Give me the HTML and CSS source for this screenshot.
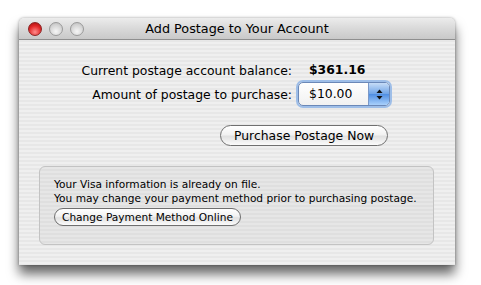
FILE: index.html
```html
<!DOCTYPE html>
<html lang="en">

<head>
    <meta charset="UTF-8">
    <meta name="viewport" content="width=device-width, initial-scale=1.0">
    <title>Add Postage to Your Account</title>
    <link rel="stylesheet" href="styles.css">
</head>

<body>
    <div class="window">
        <div class="titlebar">
            <div class="lights">
                <span class="light light-close"></span>
                <span class="light"></span>
                <span class="light"></span>
            </div>
            <div class="title">Add Postage to Your Account</div>
        </div>

        <div class="content">
            <div class="form">
                <div class="label">Current postage account balance:</div>
                <div class="balance">$361.16</div>

                <div class="label">Amount of postage to purchase:</div>
                <div class="popup">
                    <span class="popup-value">$10.00</span>
                    <span class="popup-arrows">
                        <svg width="7" height="11" viewBox="0 0 7 11">
                            <path d="M3.5 0.5 L6.5 4 L0.5 4 Z" fill="#111" />
                            <path d="M3.5 10.5 L6.5 7 L0.5 7 Z" fill="#111" />
                        </svg>
                    </span>
                </div>
            </div>

            <div class="actions">
                <button class="btn">Purchase Postage Now</button>
            </div>

            <!-- 付款信息分组框 -->
            <div class="group">
                <p>Your Visa information is already on file.</p>
                <p>You may change your payment method prior to purchasing postage.</p>
                <button class="btn btn-small">Change Payment Method Online</button>
            </div>
        </div>
    </div>
</body>

</html>
```

FILE: styles.css
```css
body {
    margin: 0;
    padding: 18px 26px 20px 19px;
    background-color: #fff;
    font-family: "DejaVu Sans", sans-serif;
    font-size: 12.4px;
    color: #000;
}

.window {
    width: 436px;
    height: 247px;
    border-radius: 5px 5px 0 0;
    background-color: #ececec;
    background-image: repeating-linear-gradient(to bottom, #efefef 0, #efefef 2px, #e7e7e7 2px, #e7e7e7 4px);
    box-shadow: 0 9px 12px rgba(0, 0, 0, 0.6), 0 0 3px rgba(0, 0, 0, 0.35);
    overflow: hidden;
}

.titlebar {
    height: 21px;
    display: flex;
    align-items: center;
    border-bottom: 1px solid #8f8f8f;
    background: linear-gradient(to bottom, #ececec, #d9d9d9 50%, #c9c9c9);
    border-radius: 5px 5px 0 0;
}

.lights {
    display: flex;
    gap: 7px;
    padding-left: 9px;
    width: 95px;
}

.light {
    box-sizing: border-box;
    width: 14px;
    height: 14px;
    border-radius: 50%;
    border: 1px solid #9a9a9a;
    background: radial-gradient(circle at 50% 70%, #f6f6f6, #d4d4d4 60%, #b8b8b8);
}

.light-close {
    border-color: #8a2323;
    background: radial-gradient(circle at 50% 75%, #ff8d8d, #e22a2a 55%, #a10c0c);
}

.title {
    flex: 1;
    padding-right: 104px;
    text-align: center;
    font-size: 12.8px;
}

.content {
    padding: 21px 0 0 0;
}

.form {
    display: grid;
    grid-template-columns: 273px 92px;
    column-gap: 6px;
    row-gap: 3px;
    align-items: center;
}

.label {
    text-align: right;
}

.balance {
    font-weight: bold;
    padding-left: 11px;
    line-height: 18px;
}

.popup {
    display: flex;
    height: 22px;
    border-radius: 5px;
    border: 1px solid #6b88b7;
    box-shadow: 0 0 0 2px #9ebee8;
    background: linear-gradient(to bottom, #ffffff, #f1f1f1);
    overflow: hidden;
}

.popup-value {
    flex: 1;
    padding-left: 10px;
    line-height: 21px;
}

.popup-arrows {
    width: 20px;
    display: flex;
    align-items: center;
    justify-content: center;
    border-left: 1px solid #7a98c8;
    background: linear-gradient(to bottom, #c6dcf7, #6ea3e6 50%, #4f8ee2 51%, #a9d0fb);
}

.actions {
    display: flex;
    padding: 19px 0 0 201px;
}

.btn {
    font-family: "DejaVu Sans", sans-serif;
    font-size: 12.4px;
    height: 21px;
    padding: 0 13px;
    border-radius: 11px;
    border: 1px solid #6f6f6f;
    background: linear-gradient(to bottom, #ffffff, #f2f2f2 45%, #e1e1e1 55%, #fbfbfb);
    color: #000;
}

.group {
    margin: 20px 21px 0 20px;
    height: 79px;
    box-sizing: border-box;
    padding: 10px 14px 0 14px;
    border: 1px solid #c3c3c3;
    border-radius: 6px;
    background-color: #e3e3e3;
    background-image: repeating-linear-gradient(to bottom, #e6e6e6 0, #e6e6e6 2px, #dfdfdf 2px, #dfdfdf 4px);
    font-size: 10.6px;
}

.group p {
    margin: 0;
    line-height: 14px;
}

.btn-small {
    margin-top: 3px;
    font-size: 10.6px;
    height: 18px;
    padding: 0 7px;
    border-radius: 9px;
}
```
